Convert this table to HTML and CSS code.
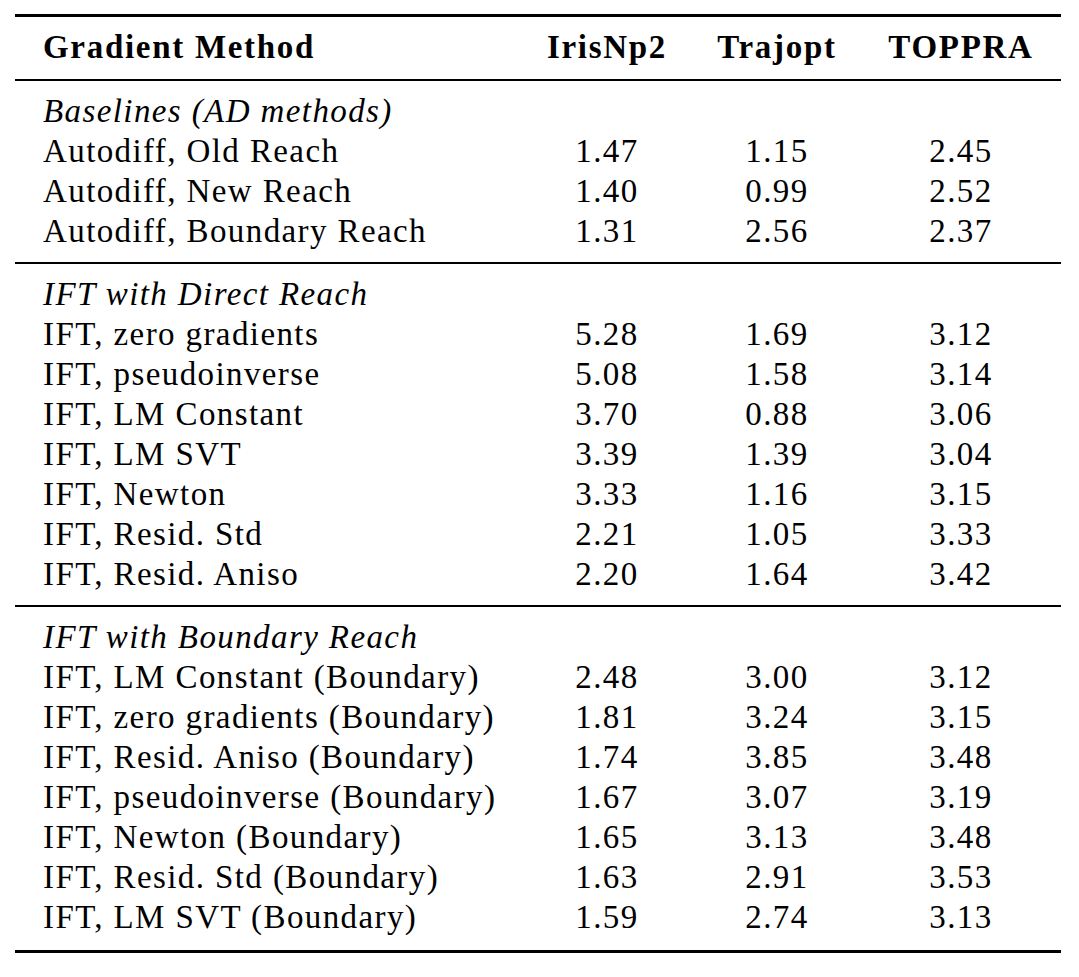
FILE: index.html
```html
<!DOCTYPE html>
<html lang="en">
<head>
<meta charset="utf-8">
<title>Gradient Method Comparison</title>
<link rel="stylesheet" href="styles.css">
</head>
<body>
<div class="tbl">
  <div class="row head">
    <div class="c1">Gradient Method</div>
    <div class="cn">IrisNp2</div>
    <div class="cn">Trajopt</div>
    <div class="cn">TOPPRA</div>
  </div>

  <div class="section">
    <div class="row"><div class="label">Baselines (AD methods)</div></div>
    <div class="row"><div class="c1">Autodiff, Old Reach</div><div class="cn">1.47</div><div class="cn">1.15</div><div class="cn">2.45</div></div>
    <div class="row"><div class="c1">Autodiff, New Reach</div><div class="cn">1.40</div><div class="cn">0.99</div><div class="cn">2.52</div></div>
    <div class="row"><div class="c1">Autodiff, Boundary Reach</div><div class="cn">1.31</div><div class="cn">2.56</div><div class="cn">2.37</div></div>
  </div>

  <div class="section">
    <div class="row"><div class="label">IFT with Direct Reach</div></div>
    <div class="row"><div class="c1">IFT, zero gradients</div><div class="cn">5.28</div><div class="cn">1.69</div><div class="cn">3.12</div></div>
    <div class="row"><div class="c1">IFT, pseudoinverse</div><div class="cn">5.08</div><div class="cn">1.58</div><div class="cn">3.14</div></div>
    <div class="row"><div class="c1">IFT, LM Constant</div><div class="cn">3.70</div><div class="cn">0.88</div><div class="cn">3.06</div></div>
    <div class="row"><div class="c1">IFT, LM SVT</div><div class="cn">3.39</div><div class="cn">1.39</div><div class="cn">3.04</div></div>
    <div class="row"><div class="c1">IFT, Newton</div><div class="cn">3.33</div><div class="cn">1.16</div><div class="cn">3.15</div></div>
    <div class="row"><div class="c1">IFT, Resid. Std</div><div class="cn">2.21</div><div class="cn">1.05</div><div class="cn">3.33</div></div>
    <div class="row"><div class="c1">IFT, Resid. Aniso</div><div class="cn">2.20</div><div class="cn">1.64</div><div class="cn">3.42</div></div>
  </div>

  <div class="section last">
    <div class="row"><div class="label">IFT with Boundary Reach</div></div>
    <div class="row"><div class="c1">IFT, LM Constant (Boundary)</div><div class="cn">2.48</div><div class="cn">3.00</div><div class="cn">3.12</div></div>
    <div class="row"><div class="c1">IFT, zero gradients (Boundary)</div><div class="cn">1.81</div><div class="cn">3.24</div><div class="cn">3.15</div></div>
    <div class="row"><div class="c1">IFT, Resid. Aniso (Boundary)</div><div class="cn">1.74</div><div class="cn">3.85</div><div class="cn">3.48</div></div>
    <div class="row"><div class="c1">IFT, pseudoinverse (Boundary)</div><div class="cn">1.67</div><div class="cn">3.07</div><div class="cn">3.19</div></div>
    <div class="row"><div class="c1">IFT, Newton (Boundary)</div><div class="cn">1.65</div><div class="cn">3.13</div><div class="cn">3.48</div></div>
    <div class="row"><div class="c1">IFT, Resid. Std (Boundary)</div><div class="cn">1.63</div><div class="cn">2.91</div><div class="cn">3.53</div></div>
    <div class="row"><div class="c1">IFT, LM SVT (Boundary)</div><div class="cn">1.59</div><div class="cn">2.74</div><div class="cn">3.13</div></div>
  </div>
</div>
</body>
</html>
```

FILE: styles.css
```css
html, body {
  margin: 0;
  padding: 0;
  background: #ffffff;
}

body {
  font-family: "Liberation Serif", "Times New Roman", serif;
  font-size: 33px;
  line-height: 40px;
  color: #000000;
  letter-spacing: 1.4px;
}

.tbl {
  margin: 14px 0 0 15px;
  width: 1046px;
  border-top: 3px solid #000;
  border-bottom: 3px solid #000;
}

.row {
  display: grid;
  grid-template-columns: 506px 172px 168px 200px;
  height: 40px;
}

.c1 {
  padding-left: 28px;
  white-space: nowrap;
}

.cn {
  text-align: center;
  white-space: nowrap;
}

.label {
  grid-column: 1 / -1;
  padding-left: 28px;
  font-style: italic;
  white-space: nowrap;
}

.head {
  font-weight: bold;
  letter-spacing: 1.7px;
  padding: 10px 0 12px;
  border-bottom: 2px solid #000;
}

.section {
  padding: 10px 0 11px;
  border-bottom: 2px solid #000;
}

.section.last {
  padding-bottom: 13px;
  border-bottom: none;
}
```
